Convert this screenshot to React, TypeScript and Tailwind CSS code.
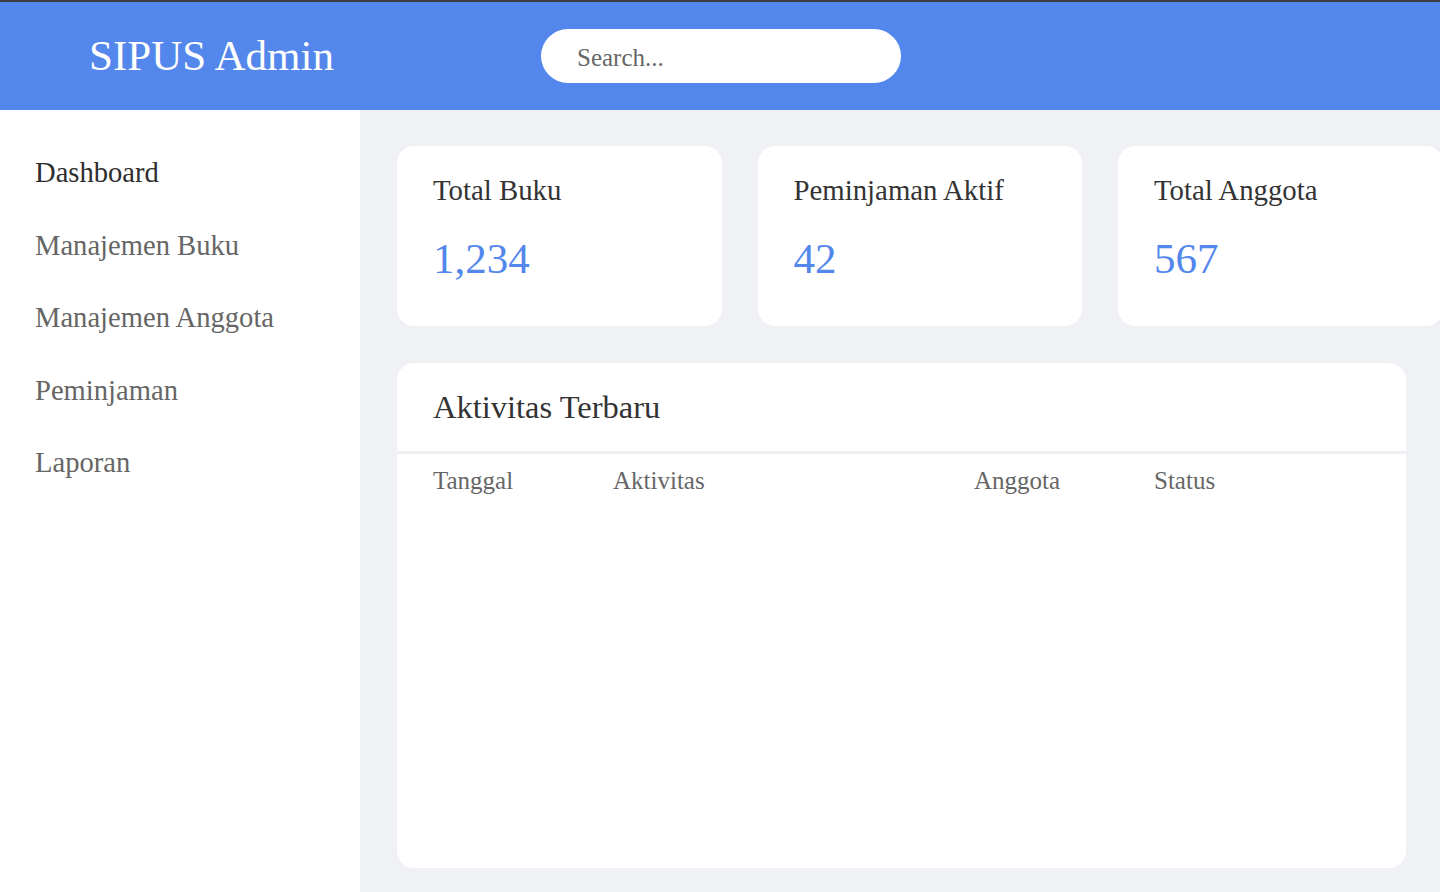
const navItems = ["Dashboard", "Manajemen Buku", "Manajemen Anggota", "Peminjaman", "Laporan"]

const stats = [
  { label: "Total Buku", value: "1,234" },
  { label: "Peminjaman Aktif", value: "42" },
  { label: "Total Anggota", value: "567" },
]

const columns = ["Tanggal", "Aktivitas", "Anggota", "Status"]

export default function App() {
  return (
    <div className="h-screen flex flex-col overflow-hidden font-['Liberation_Serif',serif]">
      {/* Header */}
      <header className="h-[110px] shrink-0 flex items-center border-t-2 border-[#3d3d3d] bg-[#5487ec] pl-[89px]">
        <h1 className="w-[452px] text-[43px] leading-[50px] text-white">SIPUS Admin</h1>
        <input
          type="text"
          placeholder="Search..."
          className="w-[360px] h-[54px] rounded-full bg-white pl-9 pt-[3px] text-[25px] text-[#333] placeholder:text-[#666] outline-none"
        />
      </header>

      <div className="flex flex-1 min-h-0">
        {/* Sidebar */}
        <aside className="w-[360px] shrink-0 bg-white pt-[27px]">
          <ul>
            {navItems.map((item, i) => (
              <li
                key={item}
                className={`pl-[35px] pr-9 text-[28.6px] leading-[72.5px] ${i === 0 ? "text-[#2e2e2e]" : "text-[#666]"}`}
              >
                {item}
              </li>
            ))}
          </ul>
        </aside>

        {/* Main */}
        <main className="flex-1 min-w-0 overflow-hidden bg-[#f0f1f5] pl-[37px] pr-[34px] pt-9">
          <div className="flex gap-9">
            {stats.map(({ label, value }) => (
              <div key={label} className="w-[324.5px] h-[180px] shrink-0 rounded-[17px] bg-white px-9 pt-[28px]">
                <h3 className="text-[28.8px] leading-[33px] text-[#333]">{label}</h3>
                <p className="mt-[27px] text-[43px] leading-[50px] text-[#5487ec]">{value}</p>
              </div>
            ))}
          </div>

          <div className="mt-[37px] h-[505px] rounded-[17px] bg-white">
            <div className="border-b-[3px] border-[#eff0f3] px-9 py-[25.5px]">
              <h2 className="text-[32.5px] leading-[37px] text-[#333]">Aktivitas Terbaru</h2>
            </div>
            <div className="grid grid-cols-[180px_361px_180px_1fr] px-9 pt-[13px]">
              {columns.map((c) => (
                <span key={c} className="text-[25px] leading-[28px] text-[#666]">
                  {c}
                </span>
              ))}
            </div>
          </div>
        </main>
      </div>
    </div>
  )
}
